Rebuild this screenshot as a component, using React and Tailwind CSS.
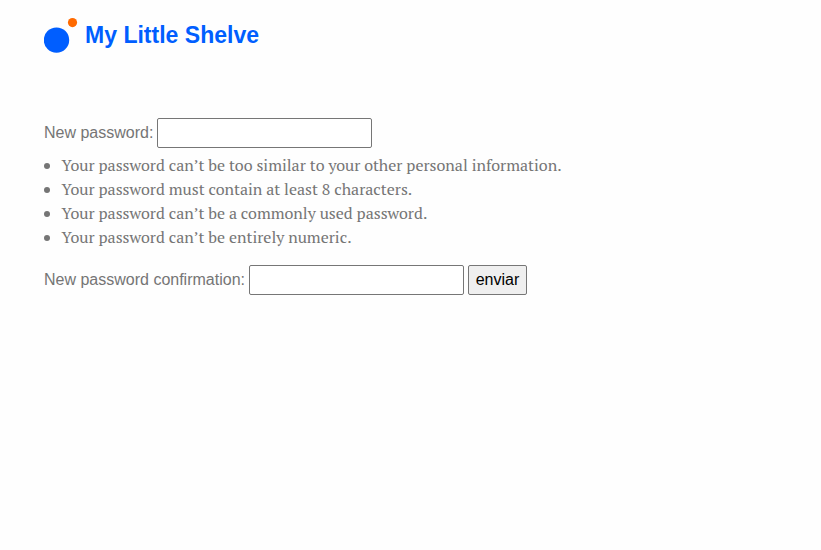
const rules = [
  "Your password can’t be too similar to your other personal information.",
  "Your password must contain at least 8 characters.",
  "Your password can’t be a commonly used password.",
  "Your password can’t be entirely numeric.",
];

function PasswordInput({ id }) {
  return (
    <input
      id={id}
      type="password"
      className="h-[30px] w-[215px] rounded-[2px] border border-[#767676] bg-white"
    />
  );
}

export default function App() {
  return (
    <div className="min-h-[550px] bg-[#fefefe] pl-11 pt-[17px] font-['Liberation_Sans',Arial,sans-serif] text-base leading-6 text-[#757575]">
      <header className="flex h-9">
        <svg className="h-9 w-[41px] shrink-0" viewBox="0 0 41 36">
          <circle cx="12.5" cy="23.1" r="12.7" fill="#005eff" />
          <circle cx="28.5" cy="5.6" r="4.6" fill="#ff6a00" />
        </svg>
        <h1 className="text-[23.04px] font-bold leading-9 text-[#005eff]">My Little Shelve</h1>
      </header>
      <form className="pt-[65px]" onSubmit={(e) => e.preventDefault()}>
        <div className="flex h-[30px] items-center gap-1">
          <label htmlFor="p1">New password:</label>
          <PasswordInput id="p1" />
        </div>
        <ul className="mt-[5px] font-['PT_Serif',serif] text-base leading-6">
          {rules.map((text) => (
            <li key={text} className="flex h-6 items-center">
              <span className="mr-[11.6px] mt-[2px] size-[6px] rounded-full bg-[#757575]" />
              <span>{text}</span>
            </li>
          ))}
        </ul>
        <div className="mt-4 flex h-[30px] items-center gap-1">
          <label htmlFor="p2">New password confirmation:</label>
          <PasswordInput id="p2" />
          <button className="h-[30px] w-[59px] rounded-[2px] border border-[#767676] bg-[#efefef] text-black">enviar</button>
        </div>
      </form>
    </div>
  );
}
